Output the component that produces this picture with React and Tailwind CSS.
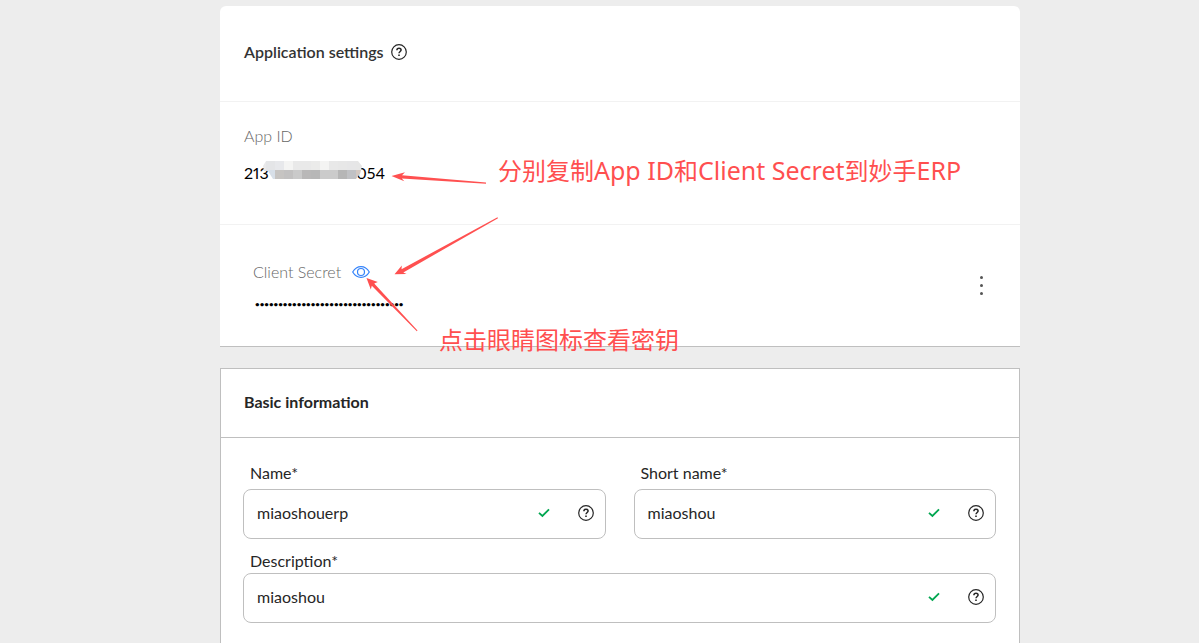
import { useState } from 'react';

const MOSAIC = [
    ['#e9e9ea', '#e4e5e7', '#e7e8eb', '#f4f4f3', '#e9e9e9', '#e9e9e9', '#ebebea', '#f4f4f3', '#e8e8e8', '#e7e7e7', '#e6e6e7', '#e6e6e6'],
    ['#dde4ec', '#d7dfe8', '#c6c4c2', '#c2c1c1', '#cacaca', '#b9b8b8', '#b7b7b7', '#cbcbcb', '#cbcbcb', '#b6b6b6', '#c0c1c4', '#d3c8c1'],
];

function HelpIcon() {
    return (
        <svg width="16" height="16" viewBox="0 0 16 16" fill="none" stroke="#262626" aria-hidden="true">
            <circle cx="8" cy="8" r="7.3" strokeWidth="1.2" />
            <path d="M5.9 6.3C5.9 5 6.8 4.3 8 4.3s2.1.7 2.1 1.8C10.1 7.400 8 7.600 8 9.300" strokeWidth="1.5" />
            <path d="M8 10.4v1.7" strokeWidth="1.6" />
        </svg>
    );
}

function CheckIcon() {
    return (
        <svg width="12" height="10" viewBox="0 0 12 10" fill="none" stroke="#00a650" strokeWidth="1.8" aria-hidden="true">
            <path d="M1 4.8l3.4 3.2L11 1.4" />
        </svg>
    );
}

function EyeIcon() {
    return (
        <svg width="18" height="12" viewBox="0 0 18 12" fill="none" stroke="#3483fa" strokeWidth="1.2" aria-hidden="true">
            <path d="M.7 6C2.8 2.4 5.6.6 9 .6S15.2 2.4 17.3 6C15.2 9.6 12.4 11.4 9 11.4S2.8 9.6.7 6z" />
            <circle cx="9" cy="6" r="3.5" />
        </svg>
    );
}

function Mosaic() {
    return (
        <svg width="99" height="18" viewBox="0 0 99 18" shapeRendering="crispEdges"
            className="absolute left-[19px] -top-0.5" aria-hidden="true">
            <clipPath id="mosaic-edge">
                <path d="M3 0h92l4 5-2 8-4 5H10L5 10H1L0 5z" />
            </clipPath>
            <g clipPath="url(#mosaic-edge)">
                {MOSAIC.map((row, y) => row.map((fill, x) => (
                    <rect key={`${x}-${y}`} x={x * 9 - 6} y={y * 9} width="9" height="9" fill={fill} />
                )))}
            </g>
        </svg>
    );
}

function Field({ id, label, initial, className }) {
    const [value, setValue] = useState(initial);

    return (
        <div className={`flex flex-col ${className}`}>
            <label htmlFor={id} className="pl-[7px] text-[#262626]">{label}*</label>
            <div className="flex h-[50px] items-center rounded-lg border border-[#bfbfbf] pb-0.5 pl-[13px] pr-[11px]">
                <input id={id} type="text" value={value} onChange={(e) => setValue(e.target.value)}
                    className="min-w-0 flex-1 bg-transparent text-[#262626] outline-none" />
                <CheckIcon />
                <button type="button" aria-label={`Help: ${label}`} className="ml-7 cursor-pointer">
                    <HelpIcon />
                </button>
            </div>
        </div>
    );
}

// Red arrows and notes that lie over the settings page
function Annotations() {
    return (
        <div className="pointer-events-none absolute inset-0 text-2xl leading-8 text-[#ff4f4f] font-['Noto_Sans','Noto_Sans_CJK_SC',sans-serif]">
            <svg width="640" height="360" viewBox="0 0 640 360" fill="#ff5050" className="absolute left-0 top-0" aria-hidden="true">
                <path d="M391.5 176L405 172.200L402 175.200L486 182.500V183.700L401.800 178.600L404.300 181.300z" />
                <path d="M394.500 274.300L401.800 265.600L401.500 269.200L497.500 217.300L498 218.300L403.300 272.400L406.600 274z" />
                <path d="M366.500 278L377.800 282L374.200 283.400L417.500 330.500L416.800 331.200L371.800 285.800L370.800 289.500z" />
            </svg>
            <p className="absolute left-[498px] top-[154px] whitespace-nowrap">
                分别复制<span className="text-[25px]">App ID</span>和<span className="text-[25px]">Client Secret</span>到妙手<span className="text-[25px]">ERP</span>
            </p>
            <p className="absolute left-[439px] top-[324px] whitespace-nowrap">点击眼睛图标查看密钥</p>
        </div>
    );
}

export default function App() {
    const [visible, setVisible] = useState(false);

    return (
        <div className="relative min-h-screen bg-[#ededed] pl-[220px] pr-[179px] pt-[6px] text-base leading-5 text-black font-['Lato',sans-serif]">
            <main>
                <section className="rounded-t-md border-b border-[#bfbfbf] bg-white">
                    <header className="flex h-24 items-center gap-[7px] border-b border-[#f2f2f2] px-6 pb-1">
                        <h2 className="font-semibold text-[#333]">Application settings</h2>
                        <button type="button" aria-label="Help: Application settings" className="cursor-pointer">
                            <HelpIcon />
                        </button>
                    </header>

                    <div className="h-[123px] border-b border-[#f2f2f2] px-6 pt-6">
                        <h3 className="font-light text-[#666]">App ID</h3>
                        <p className="relative mt-[17px] flex w-[141px] justify-between proportional-nums">
                            <span>213</span>
                            <Mosaic />
                            <span>054</span>
                        </p>
                    </div>

                    <div className="flex h-[121px] items-center justify-between pl-[33px] pr-[29px]">
                        <div className="pt-1">
                            <div className="flex items-center gap-[11px]">
                                <label htmlFor="secret" className="font-light text-[#666]">Client Secret</label>
                                <button type="button" aria-label="Show client secret" className="cursor-pointer"
                                    onClick={() => setVisible(!visible)}>
                                    <EyeIcon />
                                </button>
                            </div>
                            <input id="secret" type={visible ? 'text' : 'password'} readOnly
                                value="00000000000000000000000000000000"
                                className="mt-3 block h-5 w-[160px] bg-transparent pl-0.5 text-[8px] font-bold outline-none" />
                        </div>
                        <button type="button" aria-label="More options" className="flex w-5 cursor-pointer flex-col items-center gap-[5px] py-1">
                            <span className="size-[3px] rounded-full bg-[#555]" />
                            <span className="size-[3px] rounded-full bg-[#555]" />
                            <span className="size-[3px] rounded-full bg-[#555]" />
                        </button>
                    </div>
                </section>

                <section className="mt-[21px] border border-b-0 border-[#bfbfbf] bg-white">
                    <header className="flex h-[69px] items-center border-b border-[#bfbfbf] px-[23px] pb-0.5">
                        <h2 className="font-bold text-[#262626]">Basic information</h2>
                    </header>
                    <form className="grid grid-cols-2 gap-x-7 gap-y-3 pb-5 pl-[22px] pr-[23px] pt-[25px]">
                        <Field id="name" label="Name" initial="miaoshouerp" className="gap-1.5" />
                        <Field id="short-name" label="Short name" initial="miaoshou" className="gap-1.5" />
                        <Field id="description" label="Description" initial="miaoshou" className="col-span-2 gap-0.5" />
                    </form>
                </section>
            </main>
            <Annotations />
        </div>
    );
}
